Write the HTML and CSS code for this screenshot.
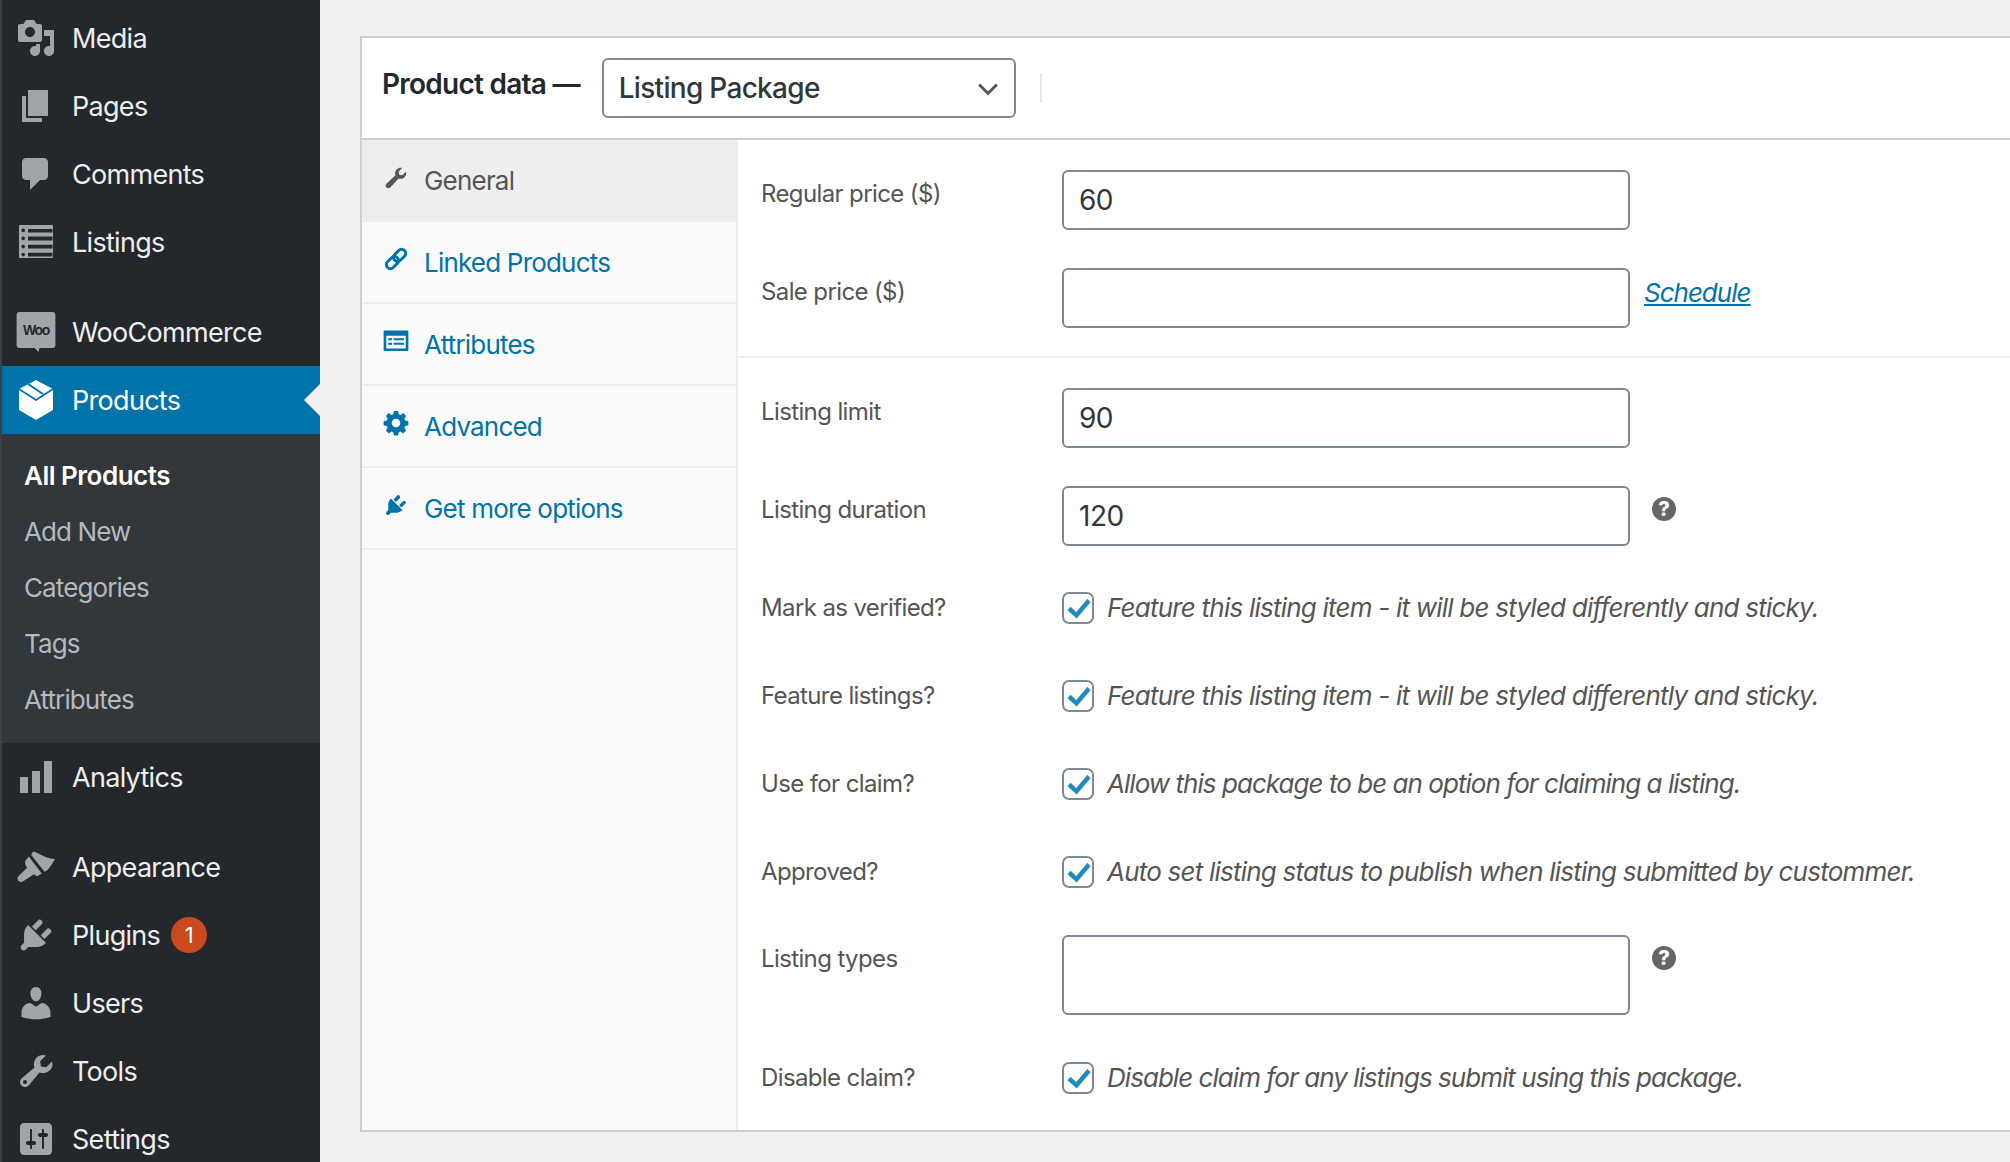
FILE: index.html
```html
<!DOCTYPE html>
<html lang="en">
<head>
    <meta charset="UTF-8">
    <title>Product data</title>
    <link rel="stylesheet" href="styles.css">
</head>
<body>
    <nav class="sidebar">
        <a class="menu-item"><svg class="menu-icon" viewBox="0 0 20 20"><path d="M13 11V4c0-.55-.45-1-1-1h-1.670L9 1H5L3.670 3H2c-.55 0-1 .45-1 1v7c0 .55.45 1 1 1h10c.55 0 1-.45 1-1zM7 4.500c1.380 0 2.500 1.120 2.500 2.500S8.380 9.500 7 9.500 4.500 8.380 4.500 7 5.620 4.500 7 4.500zM14 6h5v10.500c0 1.380-1.120 2.500-2.500 2.500S14 17.880 14 16.500s1.120-2.500 2.500-2.500c.17 0 .34.020.5.050V9h-3V6zm-4 8.050V13h2v3.500c0 1.380-1.120 2.500-2.500 2.500S7 17.880 7 16.500 8.120 14 9.500 14c.17 0 .34.020.5.050z"/></svg>Media</a>
        <a class="menu-item"><svg class="menu-icon" viewBox="0 0 20 20"><path d="M6 15V2h10v13H6zm-1 1h8v2H3V5h2v11z"/></svg>Pages</a>
        <a class="menu-item"><svg class="menu-icon" viewBox="0 0 20 20"><path d="M5 2h9c1.100 0 2 .9 2 2v7c0 1.100-.9 2-2 2h-2l-5 5v-5H5c-1.100 0-2-.9-2-2V4c0-1.100.9-2 2-2z"/></svg>Comments</a>
        <a class="menu-item"><svg class="menu-icon" viewBox="0 0 20 20"><path fill-rule="evenodd" d="M2 1.500h16c.3 0 .5.2.5.5v15.500c0 .3-.2.5-.5.5H2c-.3 0-.5-.2-.5-.5V2c0-.3.2-.5.5-.5zM6 3.500v1.700h12.200V3.500H6zm0 3.800v2h12.200v-2H6zm0 4.100v1.900h12.200v-1.900H6zm0 4v1.800h12.200v-1.800H6zM3.600 3.300a.9.9 0 1 0 0 1.800.9.9 0 0 0 0-1.800zm0 4a.9.9 0 1 0 0 1.800.9.9 0 0 0 0-1.800zm0 4.100a.9.9 0 1 0 0 1.800.9.9 0 0 0 0-1.800zm0 4a.9.9 0 1 0 0 1.800.9.9 0 0 0 0-1.800z"/></svg>Listings</a>

        <a class="menu-item menu-item-gap"><svg class="menu-icon" viewBox="0 0 20 20"><path d="M1.800 0h16.400c1 0 1.500.6 1.500 1.500v15c0 .9-.5 1.500-1.500 1.500h-6.400l-.6 2-1.800-2H1.800C.8 18 .3 17.400.3 16.500v-15C.3.600.8 0 1.800 0z"/><text class="woo-mark" x="10" y="11.600" text-anchor="middle">Woo</text></svg>WooCommerce</a>
        <a class="menu-item menu-item-current"><svg class="menu-icon" viewBox="0 0 20 20"><path fill="#fff" d="M10 0l8.500 4.500V15L10 20l-8.500-5V4.500z"/><path fill="none" stroke="#0073aa" stroke-width=".9" d="M1.500 4.500L10 10l8.500-5.500M6 2l7.500 5"/></svg>Products</a>

        <div class="submenu">
            <a class="submenu-item submenu-item-current">All Products</a>
            <a class="submenu-item">Add New</a>
            <a class="submenu-item">Categories</a>
            <a class="submenu-item">Tags</a>
            <a class="submenu-item">Attributes</a>
        </div>

        <a class="menu-item"><svg class="menu-icon" viewBox="0 0 20 20"><path d="M18 18V2h-4v16h4zm-6 0V7H8v11h4zm-6 0v-8H2v8h4z"/></svg>Analytics</a>

        <a class="menu-item menu-item-gap"><svg class="menu-icon" viewBox="0 0 20 20"><path d="M8.500 2.300C11 2.600 14 5.800 19.500 6 18 8.500 16.500 11.500 14.300 12.400L7.600 4zM6.400 4.800l6.500 8.500-2.300 1.300c-.8-.2-1.200-.8-1.600-1l-5.600 3.600c-1 .6-2.400.1-2.600-1.200-.1-.8.2-1.200.6-1.600l4.200-4c-.6-.8-1.200-1.800-1-3.400z"/></svg>Appearance</a>
        <a class="menu-item"><svg class="menu-icon" viewBox="0 0 20 20"><path d="M13.110 4.360L9.870 7.600 8 5.730l3.240-3.240c.35-.34 1.050-.2 1.560.31.52.51.65 1.210.31 1.560zm-8 1.770l.91-1.120 9.010 9.010-1.190.84c-.71.71-2.630 1.160-3.820 1.160H6.140L4.900 17.260c-.59.59-1.540.59-2.120 0-.59-.58-.59-1.530 0-2.120l1.240-1.240v-3.880c0-1.130.4-3.060 1.090-3.890zm7.260 3.970l3.240-3.240c.34-.35 1.040-.21 1.550.3.51.51.65 1.210.31 1.550l-3.240 3.250z"/></svg>Plugins<span class="badge">1</span></a>
        <a class="menu-item"><svg class="menu-icon" viewBox="0 0 20 20"><path d="M10 9.250c-2.270 0-2.730-3.440-2.730-3.440C7 4.020 7.820 2 9.970 2c2.160 0 2.980 2.020 2.710 3.810 0 0-.41 3.440-2.680 3.440zm0 2.570L12.720 10c2.390 0 4.520 2.330 4.520 4.530v2.490s-3.650 1.130-7.240 1.130c-3.650 0-7.240-1.130-7.240-1.130v-2.490c0-2.250 1.940-4.480 4.470-4.480z"/></svg>Users</a>
        <a class="menu-item"><svg class="menu-icon" viewBox="0 0 20 20"><path fill-rule="evenodd" d="M16.680 9.770c-1.340 1.340-3.300 1.670-4.950.99l-5.410 6.520c-.99.99-2.590.99-3.580 0s-.99-2.590 0-3.570l6.520-5.420c-.68-1.650-.35-3.610.99-4.950 1.280-1.280 3.120-1.640 4.730-1.080l-2.890 2.890.4 2.620 2.620.4 2.890-2.890c.57 1.610.21 3.450-1.320 4.490zM4.500 14.500a1 1 0 1 0 0 2 1 1 0 0 0 0-2z"/></svg>Tools</a>
        <a class="menu-item"><svg class="menu-icon" viewBox="0 0 20 20"><path d="M18 16V4c0-1.100-.9-2-2-2H4c-1.100 0-2 .9-2 2v12c0 1.100.9 2 2 2h12c1.100 0 2-.9 2-2zM8 11h1c.55 0 1 .45 1 1s-.45 1-1 1H8v1.500c0 .28-.22.5-.5.5s-.5-.22-.5-.5V13H6c-.55 0-1-.45-1-1s.45-1 1-1h1V5.500c0-.28.22-.5.5-.5s.5.22.5.5V11zm5-2h-1c-.55 0-1-.45-1-1s.45-1 1-1h1V5.500c0-.28.22-.5.5-.5s.5.22.5.5V7h1c.55 0 1 .45 1 1s-.45 1-1 1h-1v5.500c0 .28-.22.5-.5.5s-.5-.22-.5-.5V9z"/></svg>Settings</a>
    </nav>

    <main class="main">
        <section class="panel">
            <header class="panel-header">
                <span class="panel-title">Product data —</span>
                <div class="select-wrap">
                    <select class="select">
                        <option>Listing Package</option>
                    </select>
                    <svg class="select-arrow" viewBox="0 0 20 12"><path d="M2 2l8 8 8-8" fill="none" stroke="#50575e" stroke-width="2.600"/></svg>
                </div>
                <span class="header-sep"></span>
            </header>

            <div class="panel-body">
                <ul class="tabs">
                    <li class="tab tab-active"><svg class="tab-icon" viewBox="0 0 20 20"><path d="M17.700 6c.4 1.500 0 3.100-1.200 4.200-1.200 1.200-3 1.500-4.500.9l-6.400 7c-.8.8-2.200.8-3 0s-.8-2.200 0-3l7-6.400c-.6-1.500-.3-3.300.9-4.500C11.600 3.100 13.200 2.700 14.700 3.100L12 5.900l.5 2.300 2.300.5L17.700 6z"/></svg>General</li>
                    <li class="tab"><svg class="tab-icon" viewBox="0 0 20 20"><g fill="none" stroke="currentColor" stroke-width="2.300" transform="rotate(-45 10 10)"><rect x=".8" y="6.900" width="10.600" height="6.200" rx="3.100"/><rect x="8.600" y="6.900" width="10.600" height="6.200" rx="3.100"/></g></svg>Linked Products</li>
                    <li class="tab"><svg class="tab-icon" viewBox="0 0 20 20"><path fill-rule="evenodd" d="M1 2h18c.3 0 .5.2.5.5v14.600c0 .3-.2.5-.5.5H1c-.3 0-.5-.2-.5-.5V2.500c0-.3.2-.5.5-.5zm1.500 4v9.800h15V6h-15zM4 7.800h3v1.600H4V7.800zm4.200 0h8v1.600h-8V7.800zM4 11.300h3v1.600H4v-1.600zm4.200 0h8v1.600h-8v-1.600z"/></svg>Attributes</li>
                    <li class="tab"><svg class="tab-icon" viewBox="0 0 20 20"><path fill-rule="evenodd" d="M8.400 1h3.200l.5 2.500 1.400.6 2.100-1.400 2.200 2.200-1.400 2.100.6 1.400 2.500.5v3.200l-2.500.5-.6 1.400 1.400 2.100-2.200 2.200-2.100-1.400-1.400.6-.5 2.500H8.400l-.5-2.500-1.400-.6-2.100 1.400-2.200-2.200 1.400-2.100-.6-1.400-2.500-.5V8.900l2.500-.5.6-1.400L2.200 4.900l2.200-2.200 2.100 1.400 1.400-.6L8.400 1zM10 7a3.300 3.300 0 1 0 0 6.600A3.300 3.300 0 0 0 10 7z" transform="translate(0 -.3)"/></svg>Advanced</li>
                    <li class="tab"><svg class="tab-icon" viewBox="0 0 20 20"><path d="M13.110 4.360L9.870 7.600 8 5.730l3.240-3.240c.35-.34 1.050-.2 1.560.31.52.51.65 1.210.31 1.560zm-8 1.770l.91-1.120 9.010 9.010-1.190.84c-.71.71-2.630 1.160-3.820 1.160H6.140L4.900 17.260c-.59.59-1.540.59-2.120 0-.59-.58-.59-1.530 0-2.120l1.240-1.240v-3.880c0-1.130.4-3.060 1.090-3.890zm7.260 3.970l3.240-3.240c.34-.35 1.040-.21 1.550.3.51.51.65 1.210.31 1.550l-3.240 3.250z"/></svg>Get more options</li>
                </ul>

                <div class="fields">
                    <div class="field-group">
                        <div class="field">
                            <label class="field-label">Regular price ($)</label>
                            <input class="text-input" type="text" value="60">
                        </div>
                        <div class="field">
                            <label class="field-label">Sale price ($)</label>
                            <input class="text-input" type="text">
                            <a class="schedule-link">Schedule</a>
                        </div>
                    </div>
                    <div class="field-group">
                        <div class="field">
                            <label class="field-label">Listing limit</label>
                            <input class="text-input" type="text" value="90">
                        </div>
                        <div class="field field-before-checks">
                            <label class="field-label">Listing duration</label>
                            <input class="text-input" type="text" value="120">
                            <span class="help-tip">?</span>
                        </div>
                        <div class="field field-check">
                            <label class="field-label">Mark as verified?</label>
                            <span class="checkbox"><svg viewBox="2 2 28 28"><path d="M7 16.500l7.500 6.800L27 8.500"/></svg></span>
                            <span class="check-text">Feature this listing item - it will be styled differently and sticky.</span>
                        </div>
                        <div class="field field-check">
                            <label class="field-label">Feature listings?</label>
                            <span class="checkbox"><svg viewBox="2 2 28 28"><path d="M7 16.500l7.500 6.800L27 8.500"/></svg></span>
                            <span class="check-text">Feature this listing item - it will be styled differently and sticky.</span>
                        </div>
                        <div class="field field-check">
                            <label class="field-label">Use for claim?</label>
                            <span class="checkbox"><svg viewBox="2 2 28 28"><path d="M7 16.500l7.500 6.800L27 8.500"/></svg></span>
                            <span class="check-text check-text-tight">Allow this package to be an option for claiming a listing.</span>
                        </div>
                        <div class="field field-check">
                            <label class="field-label">Approved?</label>
                            <span class="checkbox"><svg viewBox="2 2 28 28"><path d="M7 16.500l7.500 6.800L27 8.500"/></svg></span>
                            <span class="check-text">Auto set listing status to publish when listing submitted by custommer.</span>
                        </div>
                        <div class="field">
                            <label class="field-label">Listing types</label>
                            <input class="text-input text-input-tall" type="text">
                            <span class="help-tip">?</span>
                        </div>
                        <div class="field field-check">
                            <label class="field-label">Disable claim?</label>
                            <span class="checkbox"><svg viewBox="2 2 28 28"><path d="M7 16.500l7.500 6.800L27 8.500"/></svg></span>
                            <span class="check-text check-text-tight">Disable claim for any listings submit using this package.</span>
                        </div>
                    </div>
                </div>
            </div>
        </section>
    </main>
</body>
</html>
```

FILE: styles.css
```css
* {
    box-sizing: border-box;
}
body {
    margin: 0;
    display: flex;
    height: 1162px;
    overflow: hidden;
    background: #f1f1f1;
    font-family: Inter, "Noto Sans", sans-serif;
    color: #444;
}

/* sidebar */
.sidebar {
    flex: 0 0 320px;
    height: 1162px;
    padding-top: 4px;
    overflow: hidden;
    background: #23282d;
    border-left: 2px solid #3c4146;
}
.menu-item {
    position: relative;
    display: flex;
    align-items: center;
    height: 68px;
    margin-left: -2px;
    padding-left: 16px;
    font-size: 27px;
    letter-spacing: -0.7px;
    color: #eee;
}
.menu-item-gap {
    margin-top: 22px;
}
.menu-icon {
    flex: 0 0 40px;
    width: 40px;
    height: 40px;
    margin-right: 16px;
    fill: #a0a5aa;
}
.woo-mark {
    font-size: 7px;
    font-weight: 700;
    fill: #23282d;
    font-family: "Liberation Sans", sans-serif;
}
.menu-item-current {
    background: #0073aa;
    color: #fff;
}
.menu-item-current::after {
    content: "";
    position: absolute;
    right: 0;
    top: 18px;
    border: 16px solid transparent;
    border-left-width: 0;
    border-right-color: #f1f1f1;
}
.badge {
    display: inline-flex;
    align-items: center;
    justify-content: center;
    width: 36px;
    height: 36px;
    margin-left: 11px;
    border-radius: 50%;
    background: #ca4a1f;
    color: #fff;
    font-size: 22px;
    letter-spacing: 0;
}
.submenu {
    display: flex;
    flex-direction: column;
    height: 309px;
    margin-left: -2px;
    padding: 13px 0 15px 24px;
    background: #32373c;
}
.submenu-item {
    display: flex;
    align-items: center;
    flex: 0 0 56px;
    font-size: 26px;
    letter-spacing: -0.9px;
    color: #b4b9be;
}
.submenu-item-current {
    font-weight: 600;
    letter-spacing: -0.5px;
    color: #fff;
}

/* product data panel */
.main {
    flex: 1;
    min-width: 0;
    padding: 36px 0 0 40px;
}
.panel {
    width: 1660px;
    height: 1096px;
    background: #fff;
    border: 2px solid #ccd0d4;
    border-right: 0;
}
.panel-header {
    display: flex;
    align-items: center;
    height: 102px;
    padding: 0 0 0 20px;
    border-bottom: 2px solid #ccd0d4;
}
.panel-title {
    margin-right: 22px;
    margin-top: -8px;
    font-size: 28px;
    font-weight: 600;
    letter-spacing: -0.75px;
    color: #23282d;
}
.select-wrap {
    position: relative;
    width: 414px;
    height: 60px;
}
.select {
    width: 100%;
    height: 100%;
    padding: 0 15px;
    appearance: none;
    background: #fff;
    border: 2px solid #7e8993;
    border-radius: 6px;
    font-family: inherit;
    font-size: 28px;
    font-weight: 500;
    letter-spacing: -0.7px;
    color: #32373c;
}
.select-arrow {
    position: absolute;
    right: 17px;
    top: 24px;
    width: 22px;
    height: 14px;
}
.header-sep {
    width: 2px;
    height: 30px;
    margin-left: 24px;
    background: #e5e5e5;
}
.panel-body {
    display: flex;
    height: 990px;
}

/* tabs */
.tabs {
    flex: 0 0 376px;
    margin: 0;
    padding: 0;
    list-style: none;
    background: #fafafa;
    border-right: 2px solid #eee;
}
.tab {
    display: flex;
    align-items: center;
    height: 82px;
    padding-left: 21px;
    border-bottom: 2px solid #eee;
    font-size: 26px;
    letter-spacing: -0.8px;
    color: #0073aa;
}
.tab-active {
    background: #eee;
    color: #555;
}
.tab-icon {
    flex: 0 0 26px;
    width: 26px;
    height: 26px;
    margin: -7px 15px 0 0;
    fill: currentColor;
}

/* fields */
.fields {
    flex: 1;
}
.field-group {
    padding: 11px 0 9px;
    border-bottom: 2px solid #eee;
}
.field-group:last-child {
    border-bottom: 0;
}
.field {
    display: flex;
    align-items: flex-start;
    padding: 19px 0;
}
.field-before-checks {
    padding-bottom: 18px;
}
.field-label {
    flex: 0 0 301px;
    margin-left: 23px;
    padding-top: 9px;
    font-size: 24px;
    letter-spacing: -0.62px;
    color: #555;
}
.text-input {
    width: 568px;
    height: 60px;
    padding: 0 15px;
    background: #fff;
    border: 2px solid #7e8993;
    border-radius: 6px;
    font-family: inherit;
    font-size: 28px;
    letter-spacing: -0.5px;
    color: #32373c;
}
.text-input-tall {
    height: 80px;
}
.schedule-link {
    margin: 9px 0 0 14px;
    font-size: 26px;
    font-style: italic;
    letter-spacing: -1px;
    text-decoration: underline;
    color: #0073aa;
}
.help-tip {
    display: flex;
    align-items: center;
    justify-content: center;
    width: 24px;
    height: 24px;
    margin: 11px 0 0 22px;
    border-radius: 50%;
    background: #666;
    color: #fff;
    font-size: 20px;
    font-weight: 800;
}
.field-check {
    align-items: center;
    height: 88px;
    padding: 0;
}
.field-check .field-label {
    padding-top: 0;
    margin-top: -2px;
}
.checkbox {
    flex: 0 0 32px;
    width: 32px;
    height: 32px;
    margin-right: 13px;
    background: #fff;
    border: 2px solid #7e8993;
    border-radius: 7px;
}
.checkbox svg {
    display: block;
    width: 28px;
    height: 28px;
    overflow: visible;
    fill: none;
    stroke: #1e8cbe;
    stroke-width: 4.5px;
}
.check-text {
    margin-top: -2px;
    font-size: 26px;
    font-style: italic;
    letter-spacing: -0.78px;
    white-space: nowrap;
    color: #555;
}
.check-text-tight {
    letter-spacing: -0.96px;
}
```
